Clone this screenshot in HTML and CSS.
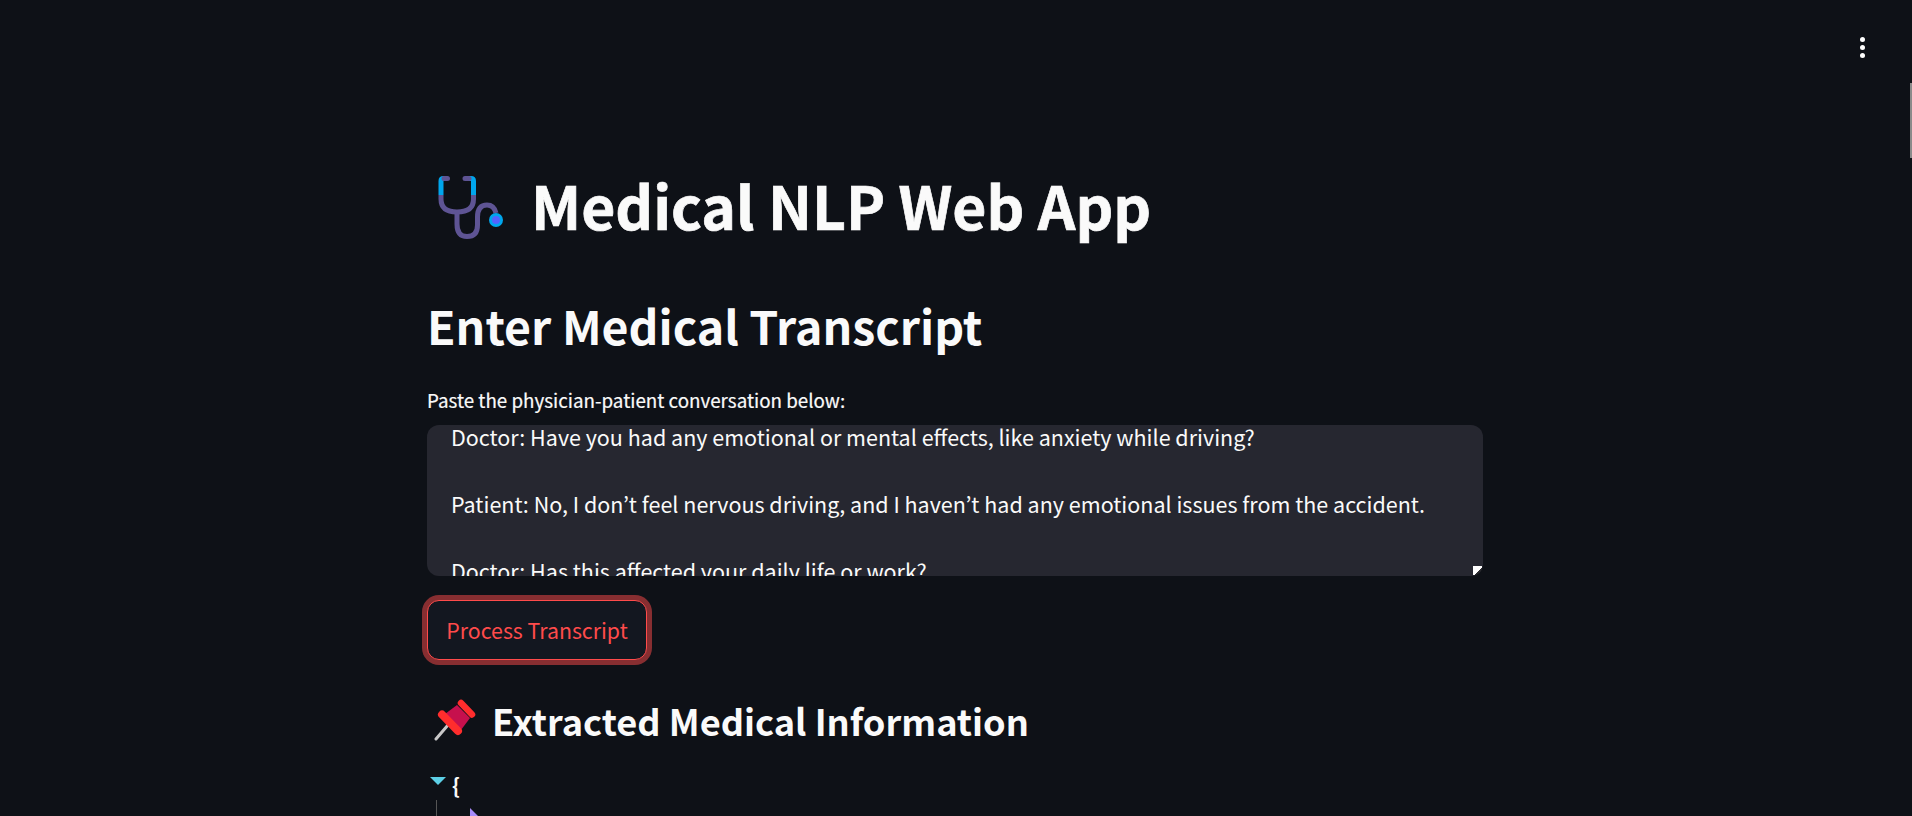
FILE: index.html
```html
<!DOCTYPE html>
<html lang="en">
<head>
<meta charset="utf-8">
<title>Medical NLP Web App</title>
<link rel="stylesheet" href="styles.css">
</head>
<body>
<button class="menu" aria-label="Menu"><span></span><span></span><span></span></button>
<div class="scroll-thumb"></div>
<main class="block">
  <h1 class="title">
    <svg class="steth" viewBox="0 0 66 64" width="66" height="64" aria-hidden="true">
      <path d="M8.500 3.500H5.500Q3 3.500 3 6V20" fill="none" stroke="#00a6ed" stroke-width="5" stroke-linecap="butt"/>
      <path d="M29.500 3.500H33Q35.500 3.500 35.500 6V20" fill="none" stroke="#00a6ed" stroke-width="5"/>
      <path d="M6 3.500H9.500M27 3.500H31" fill="none" stroke="#5e5494" stroke-width="5" stroke-linecap="round"/>
      <path d="M3 20V24Q3 37 19 37Q35.500 37 35.500 24V20" fill="none" stroke="#5e5494" stroke-width="5"/>
      <path d="M19 37V49Q19 61.500 29 61.500Q39.500 61.500 39.500 50V42Q39.500 30 49 30Q56 30 58 38" fill="none" stroke="#5e5494" stroke-width="5"/>
      <circle cx="58" cy="45" r="7" fill="#00a6ed"/>
      <circle cx="58" cy="45" r="4" fill="#5363ff"/>
    </svg>
    <span>Medical NLP Web App</span>
  </h1>
  <h2 class="section">Enter Medical Transcript</h2>
  <label class="label">Paste the physician-patient conversation below:</label>
  <div class="area">
    <div class="area-text">
      <p>Doctor: Have you had any emotional or mental effects, like anxiety while driving?</p>
      <p>Patient: No, I don’t feel nervous driving, and I haven’t had any emotional issues from the accident.</p>
      <p>Doctor: Has this affected your daily life or work?</p>
    </div>
    <span class="grip"></span>
  </div>
  <button class="process">Process Transcript</button>
  <h3 class="extracted">
    <svg class="pin" viewBox="0 0 42 42" width="42" height="42" aria-hidden="true">
      <path d="M2 40L14 26" stroke="#c8c8c8" stroke-width="3" stroke-linecap="round"/>
      <path d="M23 6L36 19L27 31L11 15Z" fill="#c6104d"/>
      <path d="M27 4L38 15.500" stroke="#ff2d2d" stroke-width="6.500" stroke-linecap="round"/>
      <path d="M8 15.500L24 32" stroke="#ff2d2d" stroke-width="8" stroke-linecap="round"/>
    </svg>
    <span>Extracted Medical Information</span>
  </h3>
  <div class="json">
    <div class="json-row"><span class="caret open"></span><span class="brace">{</span></div>
    <div class="json-child"><span class="caret closed"></span></div>
  </div>
</main>
</body>
</html>
```

FILE: styles.css
```css
* { box-sizing: border-box; }
html, body { margin: 0; height: 816px; overflow: hidden; }
body {
  background: #0e1117;
  color: #fafafa;
  font-family: "Noto Sans CJK KR", "Noto Sans", sans-serif;
  position: relative;
}
.menu {
  position: absolute; top: 37px; right: 47px;
  display: flex; flex-direction: column; gap: 3px;
  background: none; border: 0; padding: 0;
}
.menu span { width: 5px; height: 5px; border-radius: 50%; background: #fff; }
.scroll-thumb {
  position: absolute; top: 83px; right: 0; width: 2px; height: 75px;
  background: #8a8a8a;
}
.block { width: 1056px; margin-left: 427px; padding-top: 169px; }
.title {
  margin: 0; display: flex; align-items: center; gap: 27px;
  padding-left: 11px;
  font-size: 58.800px; font-weight: 700; line-height: 72px; height: 72px;
  -webkit-text-stroke: .7px #fafafa;
}
.steth { flex: none; margin-top: 4px; }
.section {
  margin: 53px 0 0; font-size: 46.500px; font-weight: 700; line-height: 62px;
}
.label {
  display: block; margin-top: 29px; font-size: 18.800px; line-height: 30px;
  -webkit-text-stroke: .2px #fafafa;
}
.area {
  margin-top: 10px; height: 151px; background: #262730; border-radius: 12px;
  position: relative; overflow: hidden;
}
.area-text { padding: 0 24px; margin-top: -5px; font-size: 21.500px; line-height: 33.600px; }
.area-text p { margin: 0 0 33.600px; white-space: nowrap; }
.grip {
  position: absolute; right: 1px; bottom: 1px; width: 9px; height: 9px;
  background: linear-gradient(135deg, #fff 58%, #2a2a2e 58%);
}
.process {
  display: block; margin-top: 24px; padding-bottom: 2px; width: 220px; height: 60px;
  background: #131720; color: #ff4b4b;
  border: 1.500px solid #ff4b4b; border-radius: 12px;
  box-shadow: 0 0 0 5px rgba(255, 75, 75, .5);
  font: 400 21.300px "Noto Sans CJK KR", sans-serif;
}
.extracted {
  margin: 35px 0 0; display: flex; align-items: center; gap: 16px;
  padding-left: 7px;
  font-size: 36.200px; font-weight: 700; line-height: 50px;
}
.pin { flex: none; }
.json { margin-top: 25px; position: relative; height: 60px; }
.json-row { display: flex; align-items: center; gap: 6px; padding-left: 3px; height: 30px; }
.brace { font-size: 21px; font-weight: 700; line-height: 30px; }
.caret { display: block; width: 0; height: 0; }
.caret.open { border-left: 8px solid transparent; border-right: 8px solid transparent; border-top: 8px solid #5ccfe6; margin-top: -8px; }
.json-child { margin-left: 9px; border-left: 1px solid #555; height: 30px; padding: 8px 0 0 33px; }
.caret.closed { border-top: 8px solid transparent; border-bottom: 8px solid transparent; border-left: 8px solid #a78bfa; }
```
